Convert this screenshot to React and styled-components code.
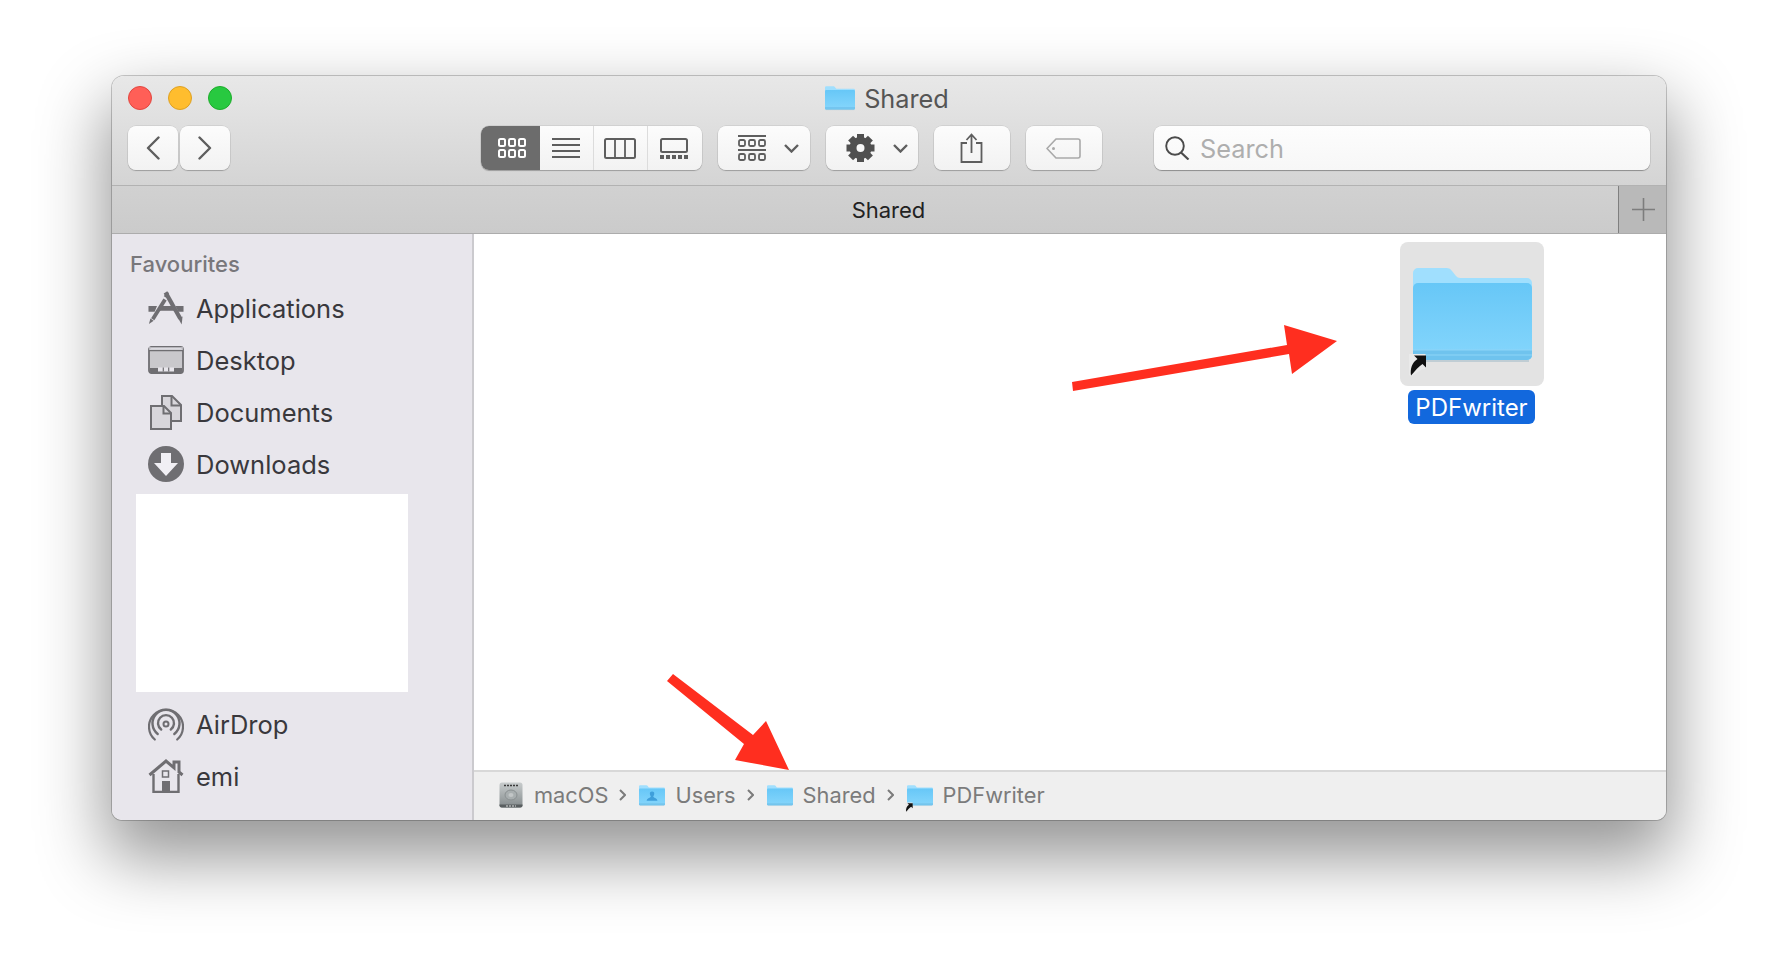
import React from "react";
import styled, { createGlobalStyle } from "styled-components";

const GlobalStyle = createGlobalStyle`
	html, body {
		margin: 0;
		padding: 0;
		background: #fff;
		font-family: Inter, "Liberation Sans", sans-serif;
	}
	#root {
		width: 1778px;
		height: 968px;
		overflow: hidden;
	}
`;

const Page = styled.div`
	padding: 76px 112px 0 112px;
	box-sizing: border-box;
	width: 1778px;
	height: 968px;
`;

const Window = styled.div`
	width: 1554px;
	height: 744px;
	border-radius: 12px 12px 10px 10px;
	overflow: visible;
	display: flex;
	flex-direction: column;
	background: #fff;
	box-shadow: 0 0 0 1px rgba(0, 0, 0, 0.2), 0 32px 68px 6px rgba(0, 0, 0, 0.42);
`;

const TitleBar = styled.div`
	height: 109px;
	flex: none;
	border-radius: 12px 12px 0 0;
	background: linear-gradient(#e8e8e8, #d4d4d4);
	border-bottom: 1px solid #b2b2b2;
	display: flex;
	flex-direction: column;
`;

const TitleRow = styled.div`
	height: 50px;
	display: grid;
	grid-template-columns: 1fr auto 1fr;
	align-items: center;
	padding: 0 0 6px 16px;
	box-sizing: border-box;
`;

const Lights = styled.div`
	display: flex;
	gap: 16px;
`;

const Light = styled.span`
	width: 24px;
	height: 24px;
	border-radius: 50%;
	box-sizing: border-box;
	background: ${(p) => p.$color};
	border: 1px solid ${(p) => p.$edge};
`;

const WindowTitle = styled.div`
	display: flex;
	align-items: center;
	gap: 9px;
	font-size: 25.3px;
	color: #555;
	margin-left: -20px;
`;

const Toolbar = styled.div`
	display: flex;
	align-items: center;
	padding-left: 16px;
	height: 44px;
`;

const ButtonPair = styled.div`
	display: flex;
	gap: 2px;
	margin-right: 251px;
`;

const ToolButton = styled.div`
	width: ${(p) => p.$w}px;
	height: 44px;
	margin-right: ${(p) => p.$mr || 0}px;
	padding-left: ${(p) => p.$pl || 0}px;
	flex: none;
	box-sizing: border-box;
	display: flex;
	align-items: center;
	justify-content: ${(p) => (p.$pl ? "flex-start" : "center")};
	gap: ${(p) => p.$gap || 0}px;
	border-radius: 8px;
	background: linear-gradient(#fcfcfc, #f2f2f2);
	box-shadow: 0 0 0 0.5px rgba(0, 0, 0, 0.12), 0 1px 1px rgba(0, 0, 0, 0.22);
`;

const ViewGroup = styled.div`
	display: flex;
	width: 221px;
	height: 44px;
	margin-right: 16px;
	border-radius: 8px;
	background: linear-gradient(#fcfcfc, #f2f2f2);
	box-shadow: 0 0 0 0.5px rgba(0, 0, 0, 0.12), 0 1px 1px rgba(0, 0, 0, 0.22);
`;

const ViewSegment = styled.div`
	flex: ${(p) => p.$w}px 0 0;
	display: flex;
	align-items: center;
	justify-content: center;
	border-left: ${(p) => (p.$divider ? "1px solid #dcdcdc" : "none")};
	box-sizing: border-box;
	padding: ${(p) => (p.$active ? "0 0 0 2px" : "0 2px 0 0")};
	background: ${(p) => (p.$active ? "#6c6c6c" : "transparent")};
	border-radius: ${(p) => (p.$active ? "8px 0 0 8px" : "0")};
`;

const SearchBox = styled.div`
	width: 496px;
	height: 44px;
	margin-left: 36.5px;
	box-sizing: border-box;
	padding-left: 11px;
	display: flex;
	align-items: center;
	gap: 10px;
	border-radius: 8px;
	background: linear-gradient(#fdfdfd, #f7f7f7);
	box-shadow: 0 0 0 0.5px rgba(0, 0, 0, 0.12), 0 1px 1px rgba(0, 0, 0, 0.3);
	font-size: 25.3px;
	color: #aeaeae;
`;

const TabBar = styled.div`
	height: 48px;
	flex: none;
	display: flex;
	background: linear-gradient(#d1d1d1, #cbcbcb);
	border-bottom: 1px solid #acacac;
	box-sizing: border-box;
`;

const TabLabel = styled.div`
	flex: 1;
	display: flex;
	align-items: center;
	justify-content: center;
	font-size: 22px;
	color: #222;
	padding-left: 47px;
`;

const NewTab = styled.div`
	width: 48px;
	display: flex;
	align-items: center;
	justify-content: center;
	padding-left: 2px;
	background: #b9b9b9;
	border-left: 1px solid #7f7f7f;
	box-sizing: border-box;
`;

const Body = styled.div`
	flex: 1;
	display: flex;
	min-height: 0;
`;

const Sidebar = styled.div`
	width: 362px;
	flex: none;
	box-sizing: border-box;
	padding-top: 18px;
	background: #e8e6ec;
	border-right: 2px solid #cbcace;
	border-radius: 0 0 0 10px;
`;

const SidebarTitle = styled.div`
	height: 24px;
	line-height: 24px;
	padding-left: 18px;
	margin-bottom: 6px;
	font-size: 22px;
	font-weight: 500;
	color: #78777b;
`;

const SidebarRow = styled.div`
	height: 52px;
	display: flex;
	align-items: center;
	gap: 12px;
	padding-left: 36px;
	margin-top: ${(p) => p.$mt || 0}px;
	font-size: 25.5px;
	color: #39383c;
`;

const Blank = styled.div`
	width: 272px;
	height: 198px;
	margin: 4px 0 0 24px;
	background: #fff;
`;

const Main = styled.div`
	flex: 1;
	display: flex;
	flex-direction: column;
	min-width: 0;
`;

const Canvas = styled.div`
	flex: 1;
	position: relative;
	display: flex;
	justify-content: flex-end;
	padding: 8px 122px 0 0;
`;

const Arrows = styled.svg`
	position: absolute;
	left: 0;
	top: 0;
`;

const SelectedItem = styled.div`
	width: 144px;
	display: flex;
	flex-direction: column;
	align-items: center;
`;

const IconTile = styled.div`
	width: 144px;
	height: 144px;
	box-sizing: border-box;
	padding: 25px 0 0 13px;
	border-radius: 8px;
	background: #e3e3e3;
`;

const FileLabel = styled.div`
	margin: 4px 1px 0 0;
	height: 34px;
	padding: 0 7px;
	display: flex;
	align-items: center;
	border-radius: 6px;
	background: #1268dd;
	color: #fff;
	font-size: 24px;
`;

const PathBar = styled.div`
	height: 50px;
	flex: none;
	box-sizing: border-box;
	padding: 0 0 2px 25px;
	display: flex;
	align-items: center;
	background: #efefef;
	border-top: 2px solid #d8d8d8;
	border-radius: 0 0 10px 0;
	font-size: 21.8px;
	color: #7b7b7b;
`;

const Crumb = styled.div`
	display: flex;
	align-items: center;
	gap: ${(p) => p.$gap || 10}px;
`;

const CrumbSep = styled.svg`
	margin: 0 13px 0 11px;
`;

const Ink = "#5e5e5e";

const Folder = ({ width, alias, person }) => {
	const id = `folder-${width}-${alias ? 1 : 0}-${person ? 1 : 0}`;
	const aliasScale = width < 50 ? 2 : 1;
	return (
		<svg width={width} height={(width * 94) / 119} viewBox="0 0 119 94" style={{ display: "block", overflow: "visible", flex: "none" }}>
			<defs>
				<linearGradient id={id} x1="0" y1="0" x2="0" y2="1">
					<stop offset="0" stopColor="#67c7f7" />
					<stop offset="1" stopColor="#85d6fc" />
				</linearGradient>
			</defs>
			<path d="M0 6a5 5 0 0 1 5-5h29a6 6 0 0 1 5 3l4 5a5 5 0 0 0 4 2h67a5 5 0 0 1 5 5v72a5 5 0 0 1-5 5H5a5 5 0 0 1-5-5z" fill="#a0dffe" />
			<path d="M0 21a5 5 0 0 1 5-5h109a5 5 0 0 1 5 5v67a5 5 0 0 1-5 5H5a5 5 0 0 1-5-5z" fill={`url(#${id})`} />
			<path d="M0 83h119v5a5 5 0 0 1-5 5H5a5 5 0 0 1-5-5z" fill="#6fc3ee" />
			<path d="M0 83h119M0 88h119" stroke="#8ed5f7" strokeWidth="1" />
			<path d="M3 94h113" stroke="#9db8c6" strokeWidth="1.2" />
			{person && (
				<path d="M59.5 30a10 10 0 0 1 10 12c-1 6-4 9-4 12 0 4 17 6 19 18H35c2-12 19-14 19-18 0-3-3-6-4-12a10 10 0 0 1 9.500-12z" fill="#3f9fdb" />
			)}
			{alias && (
				<g transform={`translate(0 94) scale(${aliasScale}) translate(0 -94)`}>
					<path d="M-4 87h16.500v15l-4 0.500-10 7-2.500-1.500z" fill="#eaeaea" />
					<path d="M-2 108.500c-1-7 1-13 6.500-16.500l-3.500-3.500h12v12l-3.500-3.500c-4 2.500-7 6.500-11.500 11.500z" fill="#111" />
				</g>
			)}
		</svg>
	);
};

const ChevronDown = () => (
	<svg width="15" height="9" viewBox="0 0 15 9">
		<path d="M1 1l6.500 6.500L14 1" fill="none" stroke={Ink} strokeWidth="2.400" />
	</svg>
);

const NavChevron = ({ flip }) => (
	<svg width="14" height="24" viewBox="0 0 14 24" style={{ transform: flip ? "scaleX(-1)" : "none" }}>
		<path d="M12.500 1.500L2 12l10.500 10.500" fill="none" stroke={Ink} strokeWidth="2.400" strokeLinecap="round" strokeLinejoin="round" />
	</svg>
);

const GridGlyph = ({ color }) => (
	<svg width="28" height="20" viewBox="0 0 28 20">
		{[0, 11].map((y) =>
			[0, 10, 20].map((x) => (
				<rect key={`${x}-${y}`} x={x + 1} y={y + 1} width="6" height="7" rx="1.500" fill="none" stroke={color} strokeWidth="2" />
			))
		)}
	</svg>
);

const ListGlyph = () => (
	<svg width="28" height="20" viewBox="0 0 28 20">
		<path d="M0 1h28M0 7h28M0 13h28M0 19h28" stroke={Ink} strokeWidth="1.800" />
	</svg>
);

const ColumnGlyph = () => (
	<svg width="32" height="21" viewBox="0 0 32 21">
		<rect x="1" y="1" width="30" height="19" rx="1.500" fill="none" stroke={Ink} strokeWidth="2" />
		<path d="M11 1v19M21 1v19" stroke={Ink} strokeWidth="1.800" />
	</svg>
);

const GalleryGlyph = () => (
	<svg width="28" height="21" viewBox="0 0 28 21">
		<rect x="1" y="1" width="26" height="13" rx="1.500" fill="none" stroke={Ink} strokeWidth="2" />
		{[0, 6, 12, 18, 24].map((x) => (
			<rect key={x} x={x} y="17" width="4" height="4" fill={Ink} />
		))}
	</svg>
);

const GroupGlyph = () => (
	<svg width="28" height="27" viewBox="0 0 28 27">
		<path d="M0 1h28M0 15h28" stroke={Ink} strokeWidth="1.800" />
		{[4, 18].map((y) =>
			[0, 10, 20].map((x) => (
				<rect key={`${x}-${y}`} x={x + 1} y={y + 1} width="6" height="6" rx="1.500" fill="none" stroke={Ink} strokeWidth="1.800" />
			))
		)}
	</svg>
);

const GearGlyph = () => (
	<svg width="29" height="28" viewBox="0 0 29 28">
		<g transform="translate(14.500 14)">
			{[0, 45, 90, 135, 180, 225, 270, 315].map((a) => (
				<rect key={a} x="-3.500" y="-14" width="7" height="8" fill="#505050" transform={`rotate(${a})`} />
			))}
			<circle r="7.500" fill="none" stroke="#505050" strokeWidth="7" />
		</g>
	</svg>
);

const ShareGlyph = () => (
	<svg width="23" height="30" viewBox="0 0 23 30">
		<path d="M7 10H1.500v19h20V10H16" fill="none" stroke={Ink} strokeWidth="1.800" />
		<path d="M11.500 20V2M6.500 7l5-5.500 5 5.500" fill="none" stroke={Ink} strokeWidth="1.800" />
	</svg>
);

const TagGlyph = () => (
	<svg width="35" height="21" viewBox="0 0 35 21">
		<path d="M10 1h22a2 2 0 0 1 2 2v15a2 2 0 0 1-2 2H10l-9-9.500z" fill="none" stroke="#a9a9a9" strokeWidth="1.600" strokeLinejoin="round" />
		<circle cx="7.500" cy="10.500" r="1.500" fill="#a9a9a9" />
	</svg>
);

const SearchGlyph = () => (
	<svg width="25" height="24" viewBox="0 0 25 24">
		<circle cx="10" cy="10" r="8.800" fill="none" stroke="#4b4b4b" strokeWidth="1.900" />
		<path d="M16 16.500l7.500 7" stroke="#4b4b4b" strokeWidth="2.200" />
	</svg>
);

const PlusGlyph = () => (
	<svg width="23" height="23" viewBox="0 0 23 23">
		<path d="M11.500 0v23M0 11.500h23" stroke="#7d7d7d" strokeWidth="1.600" />
	</svg>
);

const Mute = "#6f6e72";

const AppsIcon = () => (
	<svg width="38" height="36" viewBox="0 0 38 36">
		<path d="M18.500 1.500L34 29" stroke={Mute} strokeWidth="4.400" />
		<path d="M32 29l3.500 6.500L36.500 27z" fill={Mute} />
		<path d="M18 9L5 30" stroke={Mute} strokeWidth="4" />
		<path d="M21 1.500l-3 5" stroke={Mute} strokeWidth="3" />
		<path d="M2.500 29l-1.500 6 5-3.500z" fill={Mute} />
		<path d="M0.500 16h9l-2.500 6H0.500zM13 16h12l2.500 5H10zM29 16h8.500v6H32z" fill={Mute} />
	</svg>
);

const DesktopIcon = () => (
	<svg width="36" height="28" viewBox="0 0 36 28">
		<rect x="1" y="1" width="34" height="26" rx="2.500" fill="#c9c8cc" stroke={Mute} strokeWidth="1.800" />
		<path d="M1 4.500h34" stroke={Mute} strokeWidth="1.500" />
		<path d="M1 1h34v3H1z" fill="#e8e6ec" opacity="0.600" />
		<path d="M2 22h32v3.500a1 1 0 0 1-1 1H3a1 1 0 0 1-1-1z" fill={Mute} />
		<path d="M10 21.500h16v4H10z" fill="#e8e6ec" />
		<path d="M15.300 21.500v4M20.700 21.500v4" stroke={Mute} strokeWidth="1.200" />
	</svg>
);

const DocumentsIcon = () => (
	<svg width="32" height="35" viewBox="0 0 32 35">
		<path d="M12 1h10l9 9v16H12z" fill="#d8d6db" stroke={Mute} strokeWidth="2" />
		<path d="M21.500 1v9.500H31" fill="none" stroke={Mute} strokeWidth="2" />
		<path d="M1 11h13l7 7v16H1z" fill="#d8d6db" stroke={Mute} strokeWidth="2" />
		<path d="M13.500 11v7.500H21" fill="none" stroke={Mute} strokeWidth="2" />
	</svg>
);

const DownloadsIcon = () => (
	<svg width="36" height="36" viewBox="0 0 36 36">
		<circle cx="18" cy="18" r="18" fill={Mute} />
		<path d="M13 7h10v10h7L18 30 6 17h7z" fill="#f1eff4" />
	</svg>
);

const AirDropIcon = () => (
	<svg width="36" height="36" viewBox="0 0 36 36" fill="none" stroke={Mute} strokeWidth="2.400" strokeLinecap="round">
		<circle cx="18" cy="18" r="2.500" strokeWidth="2" />
		<path d="M13.200 23.500a8 8 0 1 1 9.600 0" />
		<path d="M9.700 28a13.500 13.500 0 1 1 16.600 0" />
		<path d="M6.800 33.500a17 17 0 1 1 22.400 0" strokeWidth="2.200" />
	</svg>
);

const HomeIcon = () => (
	<svg width="36" height="34" viewBox="0 0 36 34">
		<path d="M1.500 16L18 2l8 6.800V3h5v10l3.500 3" fill="none" stroke={Mute} strokeWidth="3" />
		<path d="M5.500 15v18h25V15" fill="none" stroke={Mute} strokeWidth="2.400" />
		<rect x="14.500" y="12" width="6" height="6" fill="none" stroke={Mute} strokeWidth="1.500" />
		<path d="M14 22h8v11h-8z" fill={Mute} />
	</svg>
);

const DiskIcon = () => (
	<svg width="24" height="26" viewBox="0 0 24 26">
		<defs>
			<linearGradient id="disk" x1="0" y1="0" x2="0" y2="1">
				<stop offset="0" stopColor="#c8cccd" />
				<stop offset="0.550" stopColor="#a2a8a9" />
				<stop offset="1" stopColor="#83898b" />
			</linearGradient>
		</defs>
		<rect x="0.500" y="0.500" width="23" height="25" rx="2.500" fill="url(#disk)" />
		<path d="M5 3.500h14" stroke="#3a3a3a" strokeWidth="1.400" strokeDasharray="2 1" />
		<ellipse cx="12" cy="13" rx="6" ry="5" fill="#a8aeaf" stroke="#8a9091" />
		<ellipse cx="12" cy="13" rx="2.500" ry="2" fill="#c2c6c7" />
		<path d="M0.500 22.500h23v1a2 2 0 0 1-2 2h-19a2 2 0 0 1-2-2z" fill="#595e60" />
		<path d="M7 24h10" stroke="#ddd" strokeWidth="1" strokeDasharray="2 1" />
	</svg>
);

const CrumbChevron = () => (
	<CrumbSep width="7" height="12" viewBox="0 0 7 12">
		<path d="M1 1l5 5-5 5" fill="none" stroke="#7b7b7b" strokeWidth="2" />
	</CrumbSep>
);

const favourites = [
	{ label: "Applications", icon: <AppsIcon /> },
	{ label: "Desktop", icon: <DesktopIcon /> },
	{ label: "Documents", icon: <DocumentsIcon /> },
	{ label: "Downloads", icon: <DownloadsIcon /> },
];

const IconSlot = styled.span`
	width: 36px;
	display: flex;
	justify-content: center;
	flex: none;
`;

export default function App() {
	return (
		<Page>
			<GlobalStyle />
			<Window>
				<TitleBar>
					<TitleRow>
						<Lights>
							<Light $color="#ff5f57" $edge="#e2463f" />
							<Light $color="#ffbd2e" $edge="#dea123" />
							<Light $color="#28c940" $edge="#1dad2b" />
						</Lights>
						<WindowTitle>
							<Folder width={30} />
							Shared
						</WindowTitle>
						<span />
					</TitleRow>
					<Toolbar>
						<ButtonPair>
							<ToolButton $w={50}>
								<NavChevron />
							</ToolButton>
							<ToolButton $w={50}>
								<NavChevron flip />
							</ToolButton>
						</ButtonPair>
						<ViewGroup>
							<ViewSegment $w={59} $active>
								<GridGlyph color="#fff" />
							</ViewSegment>
							<ViewSegment $w={53}>
								<ListGlyph />
							</ViewSegment>
							<ViewSegment $w={54} $divider>
								<ColumnGlyph />
							</ViewSegment>
							<ViewSegment $w={55} $divider>
								<GalleryGlyph />
							</ViewSegment>
						</ViewGroup>
						<ToolButton $w={92} $mr={16} $gap={18} $pl={20}>
							<GroupGlyph />
							<ChevronDown />
						</ToolButton>
						<ToolButton $w={92} $mr={15.500} $gap={17.500} $pl={20}>
							<GearGlyph />
							<ChevronDown />
						</ToolButton>
						<ToolButton $w={76.500} $mr={15.500}>
							<ShareGlyph />
						</ToolButton>
						<ToolButton $w={76.500} $mr={15.500}>
							<TagGlyph />
						</ToolButton>
						<SearchBox>
							<SearchGlyph />
							Search
						</SearchBox>
					</Toolbar>
				</TitleBar>
				<TabBar>
					<TabLabel>Shared</TabLabel>
					<NewTab>
						<PlusGlyph />
					</NewTab>
				</TabBar>
				<Body>
					<Sidebar>
						<SidebarTitle>Favourites</SidebarTitle>
						{favourites.map((item) => (
							<SidebarRow key={item.label}>
								<IconSlot>{item.icon}</IconSlot>
								{item.label}
							</SidebarRow>
						))}
						<Blank />
						<SidebarRow $mt={6}>
							<IconSlot>
								<AirDropIcon />
							</IconSlot>
							AirDrop
						</SidebarRow>
						<SidebarRow>
							<IconSlot>
								<HomeIcon />
							</IconSlot>
							emi
						</SidebarRow>
					</Sidebar>
					<Main>
						<Canvas>
							<SelectedItem>
								<IconTile>
									<Folder width={119} alias />
								</IconTile>
								<FileLabel>PDFwriter</FileLabel>
							</SelectedItem>
							<Arrows width="1192" height="537" viewBox="474 233 1192 537">
								<polygon points="1072,381 1287,344 1284,324 1337,340 1292,373 1289,353 1073,390" fill="#ff2e1f" />
								<polygon points="673,673 753,734 766,720 789,769 735,759 744,743 667,680" fill="#ff2e1f" />
							</Arrows>
						</Canvas>
						<PathBar>
							<Crumb $gap={11}>
								<DiskIcon />
								macOS
							</Crumb>
							<CrumbChevron />
							<Crumb>
								<Folder width={26} person />
								Users
							</Crumb>
							<CrumbChevron />
							<Crumb>
								<Folder width={26} />
								Shared
							</Crumb>
							<CrumbChevron />
							<Crumb>
								<Folder width={26} alias />
								PDFwriter
							</Crumb>
						</PathBar>
					</Main>
				</Body>
			</Window>
		</Page>
	);
}
